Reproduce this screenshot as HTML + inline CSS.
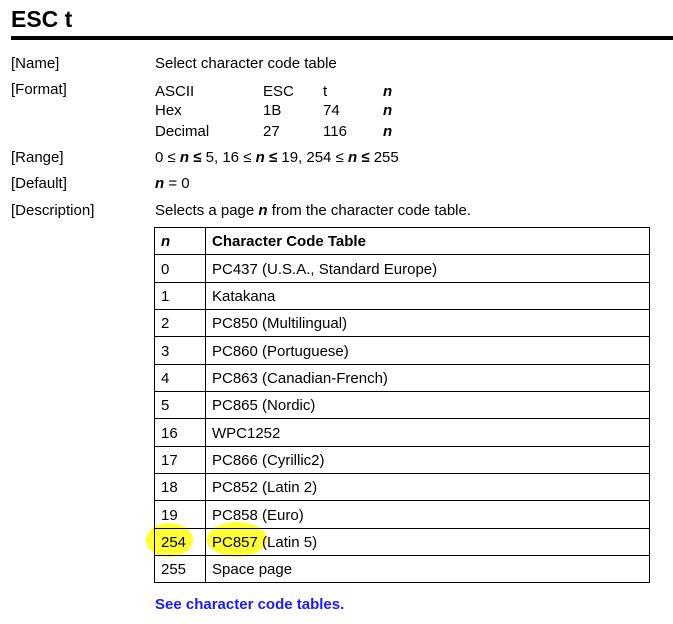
<!DOCTYPE html>
<html><head><meta charset="utf-8"><style>
body{margin:0;width:673px;height:624px;background:#fff;position:relative;font-family:"Liberation Sans",sans-serif;color:#000;overflow:hidden}
.a{position:absolute;font-size:15px;line-height:15px;white-space:nowrap}
.n{font-weight:bold;font-style:italic}
h1{position:absolute;left:11px;top:6px;margin:0;font-size:23px;font-weight:bold;line-height:26px}
.rule{position:absolute;left:11px;right:0;top:36px;height:4px;background:#000}
.hl{position:absolute;background:#ffff33;border-radius:50%}
.box{position:absolute;left:154px;top:227px;width:494px;height:354px;border:1px solid #000}
.h{position:absolute;left:154px;width:496px;height:1px;background:#000}
.v{position:absolute;left:205px;top:227px;width:1px;height:356px;background:#000}
.link{position:absolute;left:155px;top:596px;color:#1a1aff;font-weight:bold;font-size:15px}
</style></head><body>
<h1>ESC t</h1><div class="rule"></div>
<div class="a" style="left:11px;top:56px">[Name]</div>
<div class="a" style="left:155px;top:56px">Select character code table</div>
<div class="a" style="left:11px;top:82px">[Format]</div>
<div class="a" style="left:155px;top:84px">ASCII</div><div class="a" style="left:263px;top:84px">ESC</div><div class="a" style="left:323px;top:84px">t</div><div class="a n" style="left:383px;top:84px">n</div>
<div class="a" style="left:155px;top:103px">Hex</div><div class="a" style="left:263px;top:103px">1B</div><div class="a" style="left:323px;top:103px">74</div><div class="a n" style="left:383px;top:103px">n</div>
<div class="a" style="left:155px;top:124px">Decimal</div><div class="a" style="left:263px;top:124px">27</div><div class="a" style="left:323px;top:124px">116</div><div class="a n" style="left:383px;top:124px">n</div>
<div class="a" style="left:11px;top:150px">[Range]</div>
<div class="a" style="left:155px;top:150px">0 ≤ <span class="n">n</span> <b>≤</b> 5, 16 ≤ <span class="n">n</span> <b>≤</b> 19, 254 ≤ <span class="n">n</span> <b>≤</b> 255</div>
<div class="a" style="left:11px;top:176px">[Default]</div>
<div class="a" style="left:155px;top:176px"><span class="n">n</span> = 0</div>
<div class="a" style="left:11px;top:203px">[Description]</div>
<div class="a" style="left:155px;top:203px">Selects a page <span class="n">n</span> from the character code table.</div>
<div class="hl" style="left:146px;top:523px;width:47px;height:34px"></div>
<div class="hl" style="left:207px;top:522px;width:60px;height:35px"></div>
<div class="box"></div><div class="v"></div>
<div class="h" style="top:254px"></div><div class="h" style="top:282px"></div><div class="h" style="top:309px"></div><div class="h" style="top:336px"></div><div class="h" style="top:364px"></div><div class="h" style="top:391px"></div><div class="h" style="top:418px"></div><div class="h" style="top:446px"></div><div class="h" style="top:473px"></div><div class="h" style="top:500px"></div><div class="h" style="top:528px"></div><div class="h" style="top:555px"></div>
<div class="a n" style="left:161px;top:234px">n</div><div class="a" style="left:212px;top:234px"><b>Character Code Table</b></div>
<div class="a" style="left:161px;top:262px">0</div><div class="a" style="left:212px;top:262px">PC437 (U.S.A., Standard Europe)</div>
<div class="a" style="left:161px;top:289px">1</div><div class="a" style="left:212px;top:289px">Katakana</div>
<div class="a" style="left:161px;top:316px">2</div><div class="a" style="left:212px;top:316px">PC850 (Multilingual)</div>
<div class="a" style="left:161px;top:344px">3</div><div class="a" style="left:212px;top:344px">PC860 (Portuguese)</div>
<div class="a" style="left:161px;top:371px">4</div><div class="a" style="left:212px;top:371px">PC863 (Canadian-French)</div>
<div class="a" style="left:161px;top:398px">5</div><div class="a" style="left:212px;top:398px">PC865 (Nordic)</div>
<div class="a" style="left:161px;top:426px">16</div><div class="a" style="left:212px;top:426px">WPC1252</div>
<div class="a" style="left:161px;top:453px">17</div><div class="a" style="left:212px;top:453px">PC866 (Cyrillic2)</div>
<div class="a" style="left:161px;top:480px">18</div><div class="a" style="left:212px;top:480px">PC852 (Latin 2)</div>
<div class="a" style="left:161px;top:508px">19</div><div class="a" style="left:212px;top:508px">PC858 (Euro)</div>
<div class="a" style="left:161px;top:535px">254</div><div class="a" style="left:212px;top:535px">PC857 (Latin 5)</div>
<div class="a" style="left:161px;top:562px">255</div><div class="a" style="left:212px;top:562px">Space page</div>
<div class="link">See character code tables.</div>
</body></html>
